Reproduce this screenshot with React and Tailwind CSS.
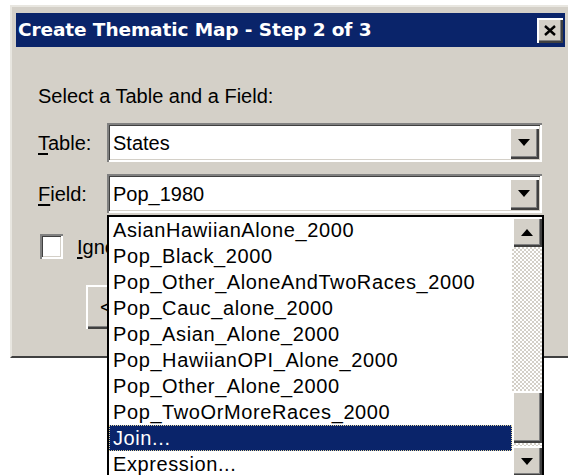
import React from "react";

const sunken =
  "shadow-[inset_2px_2px_0_#808080,inset_-2px_-2px_0_#ffffff,inset_3px_3px_0_#404040,inset_-3px_-3px_0_#d4d0c8]";
const raised =
  "shadow-[inset_2px_2px_0_#ffffff,inset_-2px_-2px_0_#404040,inset_-3px_-3px_0_#808080]";

function Arrow({ up = false }) {
  return (
    <svg width="12" height="7" viewBox="0 0 12 7" className="block">
      {up ? <path d="M0 7 L6 0 L12 7 Z" fill="#000" /> : <path d="M0 0 L12 0 L6 7 Z" fill="#000" />}
    </svg>
  );
}

function ScrollButton({ up = false, className = "" }) {
  return (
    <div className={`flex items-center justify-center bg-[#d4d0c8] ${raised} ${className}`}>
      <Arrow up={up} />
    </div>
  );
}

function Combo({ value }) {
  return (
    <div className={`flex h-[39px] w-[435px] items-center bg-white pl-[6px] pr-[3px] ${sunken}`}>
      <span className="flex-1 text-[20px] leading-[24px] text-black">{value}</span>
      <ScrollButton className="h-[32px] w-[30px]" />
    </div>
  );
}

const items = [
  "AsianHawiianAlone_2000",
  "Pop_Black_2000",
  "Pop_Other_AloneAndTwoRaces_2000",
  "Pop_Cauc_alone_2000",
  "Pop_Asian_Alone_2000",
  "Pop_HawiianOPI_Alone_2000",
  "Pop_Other_Alone_2000",
  "Pop_TwoOrMoreRaces_2000",
  "Join...",
  "Expression...",
];

export default function App() {
  return (
    <div className="relative h-[475px] w-[568px] overflow-hidden bg-white font-['Liberation_Sans',Arial,sans-serif] text-black">
      {/* dialog window */}
      <div className="ml-[10px] mt-[5px] h-[353px] w-[560px] border-2 border-t-[#e8e6e0] border-l-[#e8e6e0] border-r-[#404040] border-b-[#404040] bg-[#d4d0c8] pl-[4px] pr-[3px] pt-[6px]">
        {/* title bar */}
        <div className="flex h-[34px] items-center justify-between bg-[#0a246a] pl-[2px] pr-[2px]">
          <span className="font-['DejaVu_Sans',sans-serif] text-[18.5px] font-bold tracking-[-0.1px] text-white">
            Create Thematic Map - Step 2 of 3
          </span>
          <div className={`flex h-[25px] w-[26px] items-center justify-center bg-[#d4d0c8] ${raised}`}>
            <svg width="12" height="11" viewBox="0 0 12 11">
              <path d="M1 1 L11 10 M11 1 L1 10" stroke="#000" strokeWidth="2.4" />
            </svg>
          </div>
        </div>

        {/* body */}
        <div className="pl-[22px] pt-[37px]">
          <div className="text-[20px] leading-[24px]">Select a Table and a Field:</div>

          <div className="mt-[15px] flex items-center">
            <span className="w-[69px] text-[20px] leading-[24px]">
              <span className="underline underline-offset-[3px]">T</span>able:
            </span>
            <Combo value="States" />
          </div>

          <div className="mt-[12px] flex items-center">
            <span className="w-[69px] text-[20px] leading-[24px]">
              <span className="underline underline-offset-[3px]">F</span>ield:
            </span>
            <Combo value="Pop_1980" />
          </div>

          <div className="mt-[21px] flex items-center pl-[2px]">
            <div className={`h-[25px] w-[23px] bg-white ${sunken}`} />
            <span className="ml-[14px] text-[20px] leading-[24px]">
              <span className="underline underline-offset-[3px]">I</span>gnore Zeroes or Blanks
            </span>
          </div>

          <div className="mt-[26px] flex gap-[10px] pl-[48px]">
            <div className={`flex h-[44px] w-[150px] items-center bg-[#d4d0c8] pl-[14px] text-[20px] ${raised}`}>
              &lt; Back
            </div>
          </div>
        </div>
      </div>

      {/* open drop-down list of the Field combo */}
      <div className="absolute left-[107px] top-[215px] flex h-[264px] w-[437px] border-2 border-black bg-white">
        <div className="flex-1">
          {items.map((it) =>
            it === "Join..." ? (
              <div
                key={it}
                className="flex h-[26px] items-center border border-dotted border-[#e0d49a] bg-[#0a246a] pl-[3px] text-[20px] tracking-[0.6px] text-white"
              >
                {it}
              </div>
            ) : (
              <div key={it} className="flex h-[26px] items-center pl-[4px] text-[20px] tracking-[0.6px]">
                {it}
              </div>
            )
          )}
        </div>
        <div className="flex w-[30px] flex-col">
          <ScrollButton up className="h-[30px] w-[30px]" />
          <div className="h-[144px] bg-[repeating-conic-gradient(#d4d0c8_0%_25%,#ffffff_0%_50%)] bg-[length:4px_4px]" />
          <div className={`h-[52px] bg-[#d4d0c8] ${raised}`} />
          <div className="h-[3px] bg-[repeating-conic-gradient(#d4d0c8_0%_25%,#ffffff_0%_50%)] bg-[length:4px_4px]" />
          <ScrollButton className="h-[30px] w-[30px]" />
        </div>
      </div>
    </div>
  );
}
